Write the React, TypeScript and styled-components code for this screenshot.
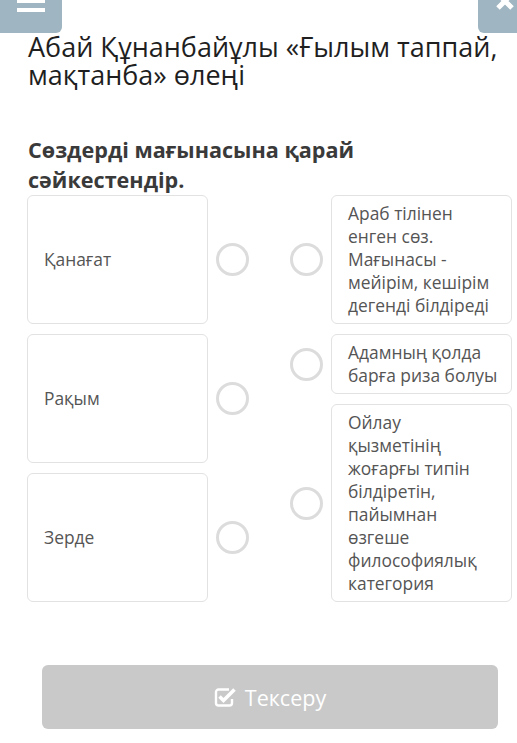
import styled, { createGlobalStyle } from "styled-components";

const GlobalStyle = createGlobalStyle`
  body {
    margin: 0;
    background: #fff;
    font-family: "Open Sans", "Liberation Sans", sans-serif;
  }
`;

const Page = styled.div`
  width: 517px;
  min-height: 743px;
  overflow: hidden;
`;

const TopBar = styled.div`
  display: flex;
  justify-content: space-between;
  height: 33px;
`;

const CornerButton = styled.div<{ $side: "left" | "right" }>`
  width: ${(p) => (p.$side === "left" ? "62px" : "39px")};
  height: 33px;
  background: #9fb5c1;
  border-radius: ${(p) => (p.$side === "left" ? "0 0 6px 0" : "0 0 0 6px")};
  svg {
    display: block;
  }
`;

const Title = styled.h1`
  margin: 0;
  padding: 0 14px 0 28px;
  font-size: 27px;
  line-height: 28px;
  font-weight: 400;
  color: #1f1f1f;
`;

const Prompt = styled.h2`
  margin: 46px 0 0;
  padding: 0 20px 0 28px;
  font-size: 21.6px;
  line-height: 30px;
  font-weight: 700;
  color: #3a3a3a;
`;

const Board = styled.div`
  margin: 0 0 0 27px;
  width: 485px;
  display: grid;
  grid-template-columns: 222px 222px;
  justify-content: space-between;
`;

const Column = styled.div`
  display: flex;
  flex-direction: column;
  gap: 10px;
`;

const Row = styled.div<{ $reverse?: boolean }>`
  display: flex;
  flex-direction: ${(p) => (p.$reverse ? "row-reverse" : "row")};
  align-items: center;
  gap: 8px;
`;

const Card = styled.div<{ $fixed?: boolean }>`
  box-sizing: border-box;
  width: 181px;
  ${(p) => (p.$fixed ? "height: 129px;" : "")}
  display: flex;
  align-items: center;
  padding: 6px 10px 6px 16px;
  border: 1px solid #e2e2e2;
  border-radius: 6px;
  font-size: 17.4px;
  line-height: 23px;
  color: #555;
  white-space: pre-line;
`;

const Dot = styled.div`
  box-sizing: border-box;
  flex: none;
  width: 33px;
  height: 33px;
  border: 3px solid #dcdcdc;
  border-radius: 50%;
`;

const Footer = styled.div`
  padding: 63px 20px 0 42px;
`;

const CheckButton = styled.button`
  width: 456px;
  height: 64px;
  border: none;
  border-radius: 6px;
  background: #c9c9c9;
  color: #fff;
  font-family: "Open Sans", "Liberation Sans", sans-serif;
  font-size: 21.5px;
  display: flex;
  align-items: center;
  justify-content: center;
  gap: 8px;
  padding: 0;
`;

const left = ["Қанағат", "Рақым", "Зерде"];
const right = [
  "Араб тілінен енген сөз. Мағынасы - мейірім, кешірім дегенді білдіреді",
  "Адамның қолда барға риза болуы",
  "Ойлау\nқызметінің жоғарғы типін білдіретін, пайымнан өзгеше философиялық категория",
];

const CheckIcon = () => (
  <svg width="23" height="20" viewBox="0 0 23 20">
    <path
      d="M15 2.5H4.5a2.5 2.5 0 0 0-2.5 2.5v11a2.5 2.5 0 0 0 2.5 2.5h11a2.5 2.5 0 0 0 2.5-2.5v-4"
      fill="none"
      stroke="#fff"
      strokeWidth="2.4"
    />
    <path d="M5.5 9.5l4 4 L20.5 2.5" fill="none" stroke="#fff" strokeWidth="3.6" />
  </svg>
);

export default function App() {
  return (
    <Page>
      <GlobalStyle />
      <TopBar>
        <CornerButton $side="left">
          <svg width="62" height="33">
            <rect x="17" y="-1" width="28" height="4" fill="#fff" />
            <rect x="17" y="8" width="28" height="4" fill="#fff" />
          </svg>
        </CornerButton>
        <CornerButton $side="right">
          <svg width="39" height="33">
            <path d="M20 -6L34 8M34 -6L20 8" stroke="#fff" strokeWidth="5" />
          </svg>
        </CornerButton>
      </TopBar>
      <Title>Абай Құнанбайұлы «Ғылым таппай, мақтанба» өлеңі</Title>
      <Prompt>Сөздерді мағынасына қарай сәйкестендір.</Prompt>
      <Board>
        <Column>
          {left.map((t) => (
            <Row key={t}>
              <Card $fixed>{t}</Card>
              <Dot />
            </Row>
          ))}
        </Column>
        <Column>
          {right.map((t) => (
            <Row key={t} $reverse>
              <Card>{t}</Card>
              <Dot />
            </Row>
          ))}
        </Column>
      </Board>
      <Footer>
        <CheckButton>
          <CheckIcon />
          Тексеру
        </CheckButton>
      </Footer>
    </Page>
  );
}
